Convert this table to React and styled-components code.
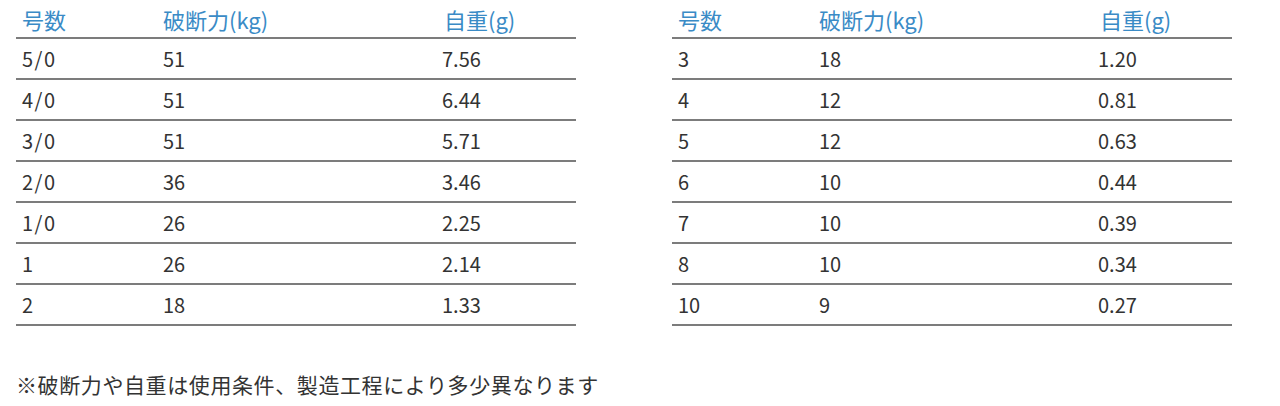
import React from 'react';
import styled, { createGlobalStyle } from 'styled-components';

const GlobalStyle = createGlobalStyle`
  body {
    margin: 0;
    background: #fff;
    font-family: "Noto Sans CJK JP", "Noto Sans", sans-serif;
    color: #333;
  }
`;

const Page = styled.div`
  padding: 0 16px;
`;

const Tables = styled.div`
  display: flex;
  gap: 96px;
`;

const Table = styled.table`
  width: 560px;
  border-collapse: collapse;
  table-layout: fixed;
`;

const Col = styled.col`
  width: ${(p) => p.$w}px;
`;

const Head = styled.th`
  height: 37px;
  padding: 0 0 0 ${(p) => p.$pad || 6}px;
  text-align: left;
  font-weight: 400;
  font-size: 22px;
  color: #3a8bc6;
  border-bottom: 2px solid #7c7c7c;
  vertical-align: middle;
  line-height: 1;
`;

const Cell = styled.td`
  height: 39px;
  padding: 0 0 0 6px;
  font-size: 20px;
  color: #333;
  border-bottom: 2px solid #7c7c7c;
  vertical-align: middle;
  line-height: 1;
`;

const Size = styled.span`
  letter-spacing: 1.5px;
`;

const Note = styled.p`
  margin: 43px 0 0;
  font-size: 21px;
  letter-spacing: 0.6px;
  color: #333;
`;

const left = [
  ['5/0', '51', '7.56'],
  ['4/0', '51', '6.44'],
  ['3/0', '51', '5.71'],
  ['2/0', '36', '3.46'],
  ['1/0', '26', '2.25'],
  ['1', '26', '2.14'],
  ['2', '18', '1.33'],
];

const right = [
  ['3', '18', '1.20'],
  ['4', '12', '0.81'],
  ['5', '12', '0.63'],
  ['6', '10', '0.44'],
  ['7', '10', '0.39'],
  ['8', '10', '0.34'],
  ['10', '9', '0.27'],
];

function SpecTable({ rows }) {
  return (
    <Table>
      <colgroup>
        <Col $w={141} />
        <Col $w={279} />
        <Col $w={140} />
      </colgroup>
      <thead>
        <tr>
          <Head>号数</Head>
          <Head>破断力(kg)</Head>
          <Head $pad={8}>自重(g)</Head>
        </tr>
      </thead>
      <tbody>
        {rows.map((r) => (
          <tr key={r[0]}>
            <Cell>{r[0].includes('/') ? <Size>{r[0]}</Size> : r[0]}</Cell>
            <Cell>{r[1]}</Cell>
            <Cell>{r[2]}</Cell>
          </tr>
        ))}
      </tbody>
    </Table>
  );
}

export default function App() {
  return (
    <>
      <GlobalStyle />
      <Page>
        <Tables>
          <SpecTable rows={left} />
          <SpecTable rows={right} />
        </Tables>
        <Note>※破断力や自重は使用条件、製造工程により多少異なります</Note>
      </Page>
    </>
  );
}
